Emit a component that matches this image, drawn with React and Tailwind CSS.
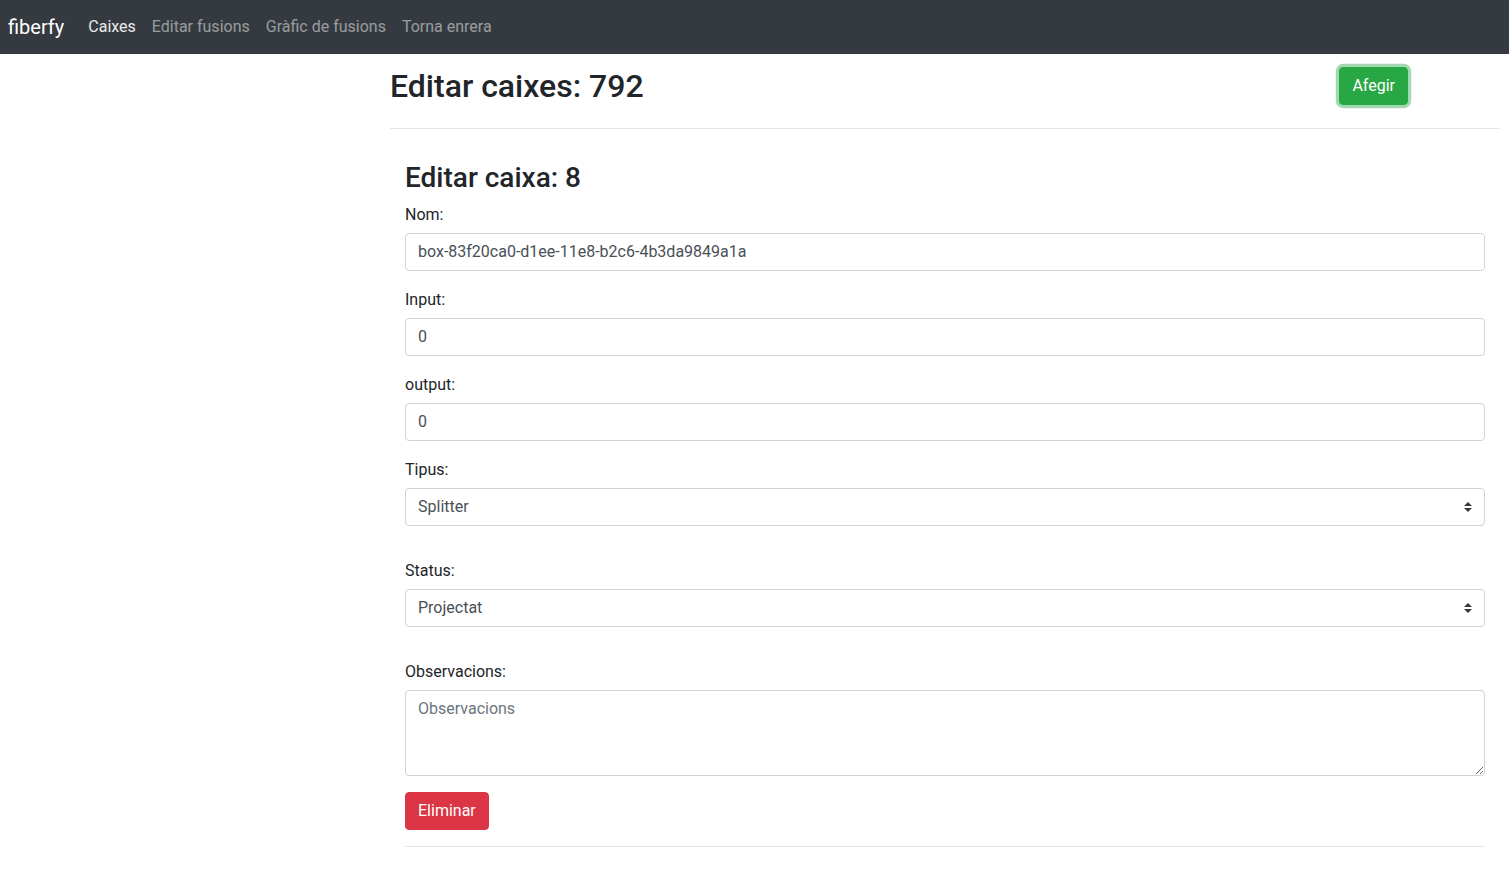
import React from 'react';

const font = { fontFamily: 'Roboto, "Liberation Sans", sans-serif' };

const inputCls =
  'block w-full h-[38px] px-3 py-1.5 text-base text-[#495057] bg-white border border-[#ced4da] rounded-[4px] outline-none';

const SelectArrow = () => (
  <svg
    className="absolute right-[13px] top-1/2 -translate-y-1/2 pointer-events-none"
    width="8"
    height="10"
    viewBox="0 0 4 5"
  >
    <path fill="#343a40" d="M2 0L0 2h4zm0 5L0 3h4z" />
  </svg>
);

const Field = ({ label, children, extra, last }) => (
  <div className={extra ? 'mb-[33px]' : last ? 'mb-4' : 'mb-[17px]'}>
    <label className="block mb-[6px] leading-6 text-[#212529]">{label}</label>
    {children}
  </div>
);

const App = () => {
  return (
    <div className="min-h-[873px] bg-white text-base text-[#212529]" style={font}>
      <nav className="h-[54px] bg-[#343a40] flex items-center px-2">
        <a className="text-white text-xl mr-4 leading-[30px]">fiberfy</a>
        <ul className="flex">
          <li><a className="block px-2 text-white/90">Caixes</a></li>
          <li><a className="block px-2 text-white/50">Editar fusions</a></li>
          <li><a className="block px-2 text-white/50">Gràfic de fusions</a></li>
          <li><a className="block px-2 text-white/50">Torna enrera</a></li>
        </ul>
      </nav>

      <div className="flex">
        <div className="w-[390px] shrink-0" />
        <div className="flex-1 mr-[9px]">
          <div className="flex items-center justify-between pt-[13px]">
            <h2 className="text-[32px] font-medium leading-[1.2] mb-2">Editar caixes: 792</h2>
            <button className="mr-[92px] -mt-[9px] h-[38px] px-3 rounded-[4px] bg-[#28a745] border border-[#28a745] text-white shadow-[0_0_0_3.2px_rgba(72,180,97,0.5)]">
              Afegir
            </button>
          </div>
          <hr className="mt-[15px] border-t border-black/10" />

          <div className="px-[15px] pt-8">
            <h3 className="text-[28px] font-medium leading-[1.2] mb-2">Editar caixa: 8</h3>
            <form>
              <Field label="Nom:">
                <input className={inputCls} defaultValue="box-83f20ca0-d1ee-11e8-b2c6-4b3da9849a1a" />
              </Field>
              <Field label="Input:">
                <input className={inputCls} defaultValue="0" />
              </Field>
              <Field label="output:">
                <input className={inputCls} defaultValue="0" />
              </Field>
              <Field label="Tipus:" extra>
                <div className="relative">
                  <select className={`${inputCls} appearance-none`} defaultValue="Splitter">
                    <option>Splitter</option>
                    <option>Caixa</option>
                  </select>
                  <SelectArrow />
                </div>
              </Field>
              <Field label="Status:" extra>
                <div className="relative">
                  <select className={`${inputCls} appearance-none`} defaultValue="Projectat">
                    <option>Projectat</option>
                    <option>Instal·lat</option>
                  </select>
                  <SelectArrow />
                </div>
              </Field>
              <Field label="Observacions:" last>
                <textarea
                  rows={3}
                  placeholder="Observacions"
                  className="block w-full h-[86px] px-3 py-1.5 text-base leading-6 text-[#495057] placeholder:text-[#6c757d] bg-white border border-[#ced4da] rounded-[4px] outline-none"
                />
              </Field>
              <button
                type="button"
                className="h-[38px] px-3 rounded-[4px] bg-[#dc3545] border border-[#dc3545] text-white"
              >
                Eliminar
              </button>
            </form>
            <hr className="mt-4 border-t border-black/10" />
          </div>
        </div>
      </div>
    </div>
  );
};

export default App;
